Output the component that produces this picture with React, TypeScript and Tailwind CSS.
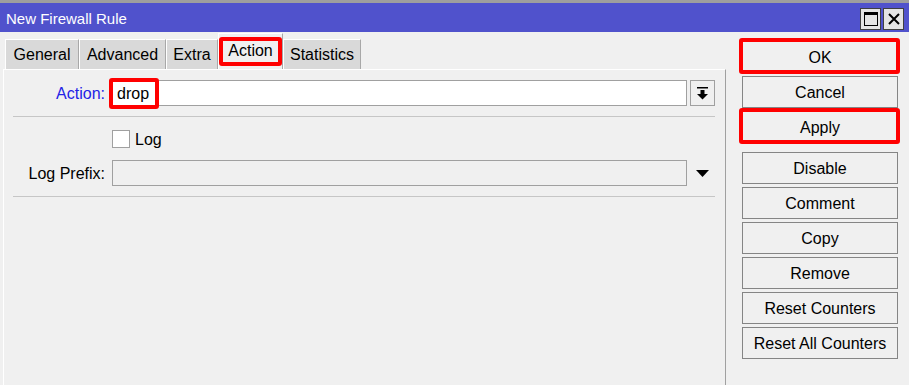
import React from 'react';

const tabs = [
    { label: 'General', w: 'w-[74px]' },
    { label: 'Advanced', w: 'w-[87px]' },
    { label: 'Extra', w: 'w-[52px]' },
    { label: 'Action', w: 'w-[65px]', active: true },
    { label: 'Statistics', w: 'w-[78px]' },
];

const RedBox = ({ className }: { className: string }) => (
    <div className={`pointer-events-none absolute rounded-[3px] border-4 border-[#ff0000] ${className}`} />
);

const Btn = ({ label, marked, className = '' }: { label: string; marked?: boolean; className?: string }) => (
    <div className={`relative ${className}`}>
        <button className="flex h-[32px] w-[156px] items-center justify-center border border-[#858585] bg-[#f0f0f0] pt-px text-[16px] text-black">
            {label}
        </button>
        {marked && <RedBox className="-left-[3px] -right-[2px] -top-[3px] -bottom-[1px]" />}
    </div>
);

const App = () => {
    return (
        <div className="flex h-[385px] w-[909px] flex-col overflow-hidden bg-[#f0f0f0] font-['Liberation_Sans',Arial,sans-serif] text-black">
            <div className="h-[3px] bg-[#9e9e9e]" />
            {/* title bar */}
            <div className="flex h-[29px] items-center justify-between bg-[#5052cc] pl-[6px] pr-[5px]">
                <span className="pt-[3px] text-[15px] text-white">New Firewall Rule</span>
                <div className="flex gap-[2px] pt-[3px]">
                    <div className="flex h-[22px] w-[21px] items-center justify-center border border-[#404040] bg-[#e4e4e4]">
                        <svg width="14" height="14" viewBox="0 0 14 14">
                            <rect x="0.5" y="0.5" width="13" height="13" fill="none" stroke="#000" />
                            <rect x="0" y="0" width="14" height="3" fill="#000" />
                        </svg>
                    </div>
                    <div className="flex h-[22px] w-[21px] items-center justify-center border border-[#404040] bg-[#e4e4e4]">
                        <svg width="12" height="12" viewBox="0 0 12 12">
                            <path d="M1 1 L11 11 M11 1 L1 11" stroke="#000" strokeWidth="2" />
                        </svg>
                    </div>
                </div>
            </div>

            <div className="flex flex-1">
                {/* left: tabs + panel */}
                <div className="flex w-[726px] flex-col pl-[3px]">
                    <div className="flex h-[37px] items-end pl-[2px]">
                        {tabs.map((t) =>
                            t.active ? (
                                <div
                                    key={t.label}
                                    className={`relative flex h-[36px] ${t.w} items-center justify-center border-l border-t border-r border-l-white border-t-white border-r-[#a8a8a8] bg-[#f0f0f0] pb-[1px] text-[16px]`}
                                >
                                    {t.label}
                                    <RedBox className="left-[0px] right-0 top-[3px] bottom-[3px]" />
                                </div>
                            ) : (
                                <div
                                    key={t.label}
                                    className={`flex h-[30px] ${t.w} items-center justify-center border-l border-t border-r border-l-white border-t-white border-r-[#a8a8a8] bg-[#d9d9d9] pt-px text-[16px]`}
                                >
                                    {t.label}
                                </div>
                            )
                        )}
                    </div>

                    <div className="flex flex-1 flex-col border-l border-t border-r border-l-white border-t-white border-r-[#a0a0a0] pt-[10px] text-[16px]">
                        {/* Action row */}
                        <div className="flex h-[26px] items-center">
                            <span className="w-[101px] pt-px text-right text-[#2323e6]">Action:</span>
                            <div className="relative ml-[7px] flex h-[26px] w-[575px] items-center border border-[#a0a0a0] bg-white pl-[4px] pt-px">
                                drop
                                <RedBox className="-left-[4px] top-[-3px] h-[31px] w-[50px]" />
                            </div>
                            <div className="ml-[3px] flex h-[26px] w-[25px] items-center justify-center border border-[#a0a0a0] bg-[#f0f0f0]">
                                <svg width="11" height="13" viewBox="0 0 11 13">
                                    <rect x="0" y="0" width="11" height="1.5" fill="#000" />
                                    <rect x="3.5" y="3" width="4" height="4" fill="#000" />
                                    <polygon points="0,7 11,7 5.5,12.5" fill="#000" />
                                </svg>
                            </div>
                        </div>

                        <div className="ml-[9px] mr-[10px] mt-[10px] h-px bg-[#c6c6c6]" />

                        {/* Log row */}
                        <div className="mt-[13px] flex h-[18px] items-center pl-[108px]">
                            <div className="h-[18px] w-[18px] border border-[#a0a0a0] bg-white" />
                            <span className="ml-[5px] pt-px">Log</span>
                        </div>

                        {/* Log Prefix row */}
                        <div className="mt-[12px] flex h-[26px] items-center">
                            <span className="w-[101px] pt-px text-right">Log Prefix:</span>
                            <div className="ml-[7px] h-[26px] w-[575px] border border-[#a0a0a0] bg-[#f0f0f0]" />
                            <div className="ml-[3px] flex h-[26px] w-[25px] items-center justify-center">
                                <svg width="13" height="7" viewBox="0 0 13 7">
                                    <polygon points="0,0 13,0 6.5,7" fill="#000" />
                                </svg>
                            </div>
                        </div>

                        <div className="ml-[9px] mr-[10px] mt-[10px] h-px bg-[#c6c6c6]" />
                    </div>
                </div>

                {/* right: buttons */}
                <div className="flex flex-col gap-[3px] pl-[16px] pt-[9px]">
                    <Btn label="OK" marked />
                    <Btn label="Cancel" />
                    <Btn label="Apply" marked />
                    <Btn label="Disable" className="mt-[6px]" />
                    <Btn label="Comment" />
                    <Btn label="Copy" />
                    <Btn label="Remove" />
                    <Btn label="Reset Counters" />
                    <Btn label="Reset All Counters" />
                </div>
            </div>
        </div>
    );
};

export default App;
